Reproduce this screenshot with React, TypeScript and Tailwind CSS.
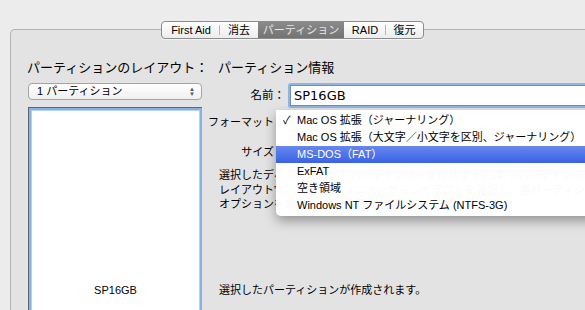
import React from 'react';

const tabs = [
  { label: 'First Aid', w: 'w-[58px]', divider: true },
  { label: '消去', w: 'w-[38px]', divider: false },
  { label: 'パーティション', w: 'w-[86px]', active: true, divider: false },
  { label: 'RAID', w: 'w-[42px]', divider: true },
  { label: '復元', w: 'w-[37px]', divider: false },
];

const formats = [
  { label: 'Mac OS 拡張（ジャーナリング）', checked: true },
  { label: 'Mac OS 拡張（大文字／小文字を区別、ジャーナリング）' },
  { label: 'MS-DOS（FAT）', selected: true },
  { label: 'ExFAT' },
  { label: '空き領域' },
  { label: 'Windows NT ファイルシステム (NTFS-3G)' },
];

function TabBar() {
  return (
    <div className="flex h-[18px] rounded-[4px] border border-[#8c8c8c] bg-gradient-to-b from-white to-[#ececec] overflow-hidden shadow-[0_1px_0_rgba(255,255,255,0.6)]">
      {tabs.map((t) => (
        <div
          key={t.label}
          className={`relative flex items-center justify-center text-[11px] leading-none ${t.w} ${
            t.active ? 'bg-gradient-to-b from-[#8a8a8a] to-[#747474] text-[#e6e6e6]' : 'text-black'
          }`}
        >
          {t.label}
          {t.divider && <span className="absolute right-0 top-[3px] h-[10px] w-px bg-[#b5b5b5]" />}
        </div>
      ))}
    </div>
  );
}

export default function App() {
  return (
    <div className="relative w-[585px] h-[310px] overflow-hidden bg-[#ececec] text-black font-['Liberation_Sans','Noto_Sans_CJK_JP',sans-serif]">
      <div className="flex flex-col pt-[21px]">
        <div className="relative z-10 flex justify-center">
          <TabBar />
        </div>

        <div className="-mt-[10px] ml-[10px] flex h-[300px] w-[620px] rounded-tl-[5px] border-l border-t border-[#b3b3b3] bg-[#e3e3e3] pl-[17px] pt-[30px]">
          {/* left column */}
          <div className="flex w-[174px] flex-col">
            <div className="whitespace-nowrap text-[13px] leading-[16px] -ml-px">パーティションのレイアウト：</div>
            <div className="mt-[7px] flex h-[17px] items-center justify-between rounded-[4px] border border-[#a4a4a4] bg-gradient-to-b from-white to-[#f0f0f0] pl-[8px] pr-[6px]">
              <span className="text-[11px] leading-none">1 パーティション</span>
              <span className="flex flex-col text-[6px] leading-[5px] text-[#555]">
                <span>▲</span>
                <span>▼</span>
              </span>
            </div>
            <div className="mt-[7px] h-[210px] border-l border-t border-[#666] bg-[#84b2e6] p-[2px]">
              <div className="flex h-full flex-col items-center justify-end border border-[#b5d0ef] bg-white pb-[17px]">
                <span className="text-[11px] leading-[14px]">SP16GB</span>
              </div>
            </div>
          </div>

          {/* right column */}
          <div className="flex w-[420px] flex-col">
            <div className="whitespace-nowrap pl-[16px] text-[13px] leading-[16px]">パーティション情報</div>

            <div className="mt-[7px] flex h-[25px] items-center">
              <div className="flex w-[83px] justify-end whitespace-nowrap text-[11.5px]">名前：</div>
              <div className="ml-[3px] h-[25px] w-[330px] rounded-[3px] bg-[#8fb6e3] p-[2px]">
                <div className="flex h-full items-center border border-[#6d90bf] bg-white pl-[3px] text-[13px] font-['DejaVu_Sans',sans-serif]">
                  SP16GB
                </div>
              </div>
            </div>

            <div className="mt-[6px] flex h-[16px] items-center">
              <div className="flex w-[83px] justify-end whitespace-nowrap text-[11px]">フォーマット：</div>
            </div>

            <div className="mt-[14px] flex h-[16px] items-center">
              <div className="flex w-[83px] justify-end whitespace-nowrap text-[11px]">サイズ：</div>
            </div>

            <div className="mt-[8px] whitespace-nowrap pl-[17px] text-[11px] leading-[14.5px]">
              <div>選択したディスクに対してパーティションを作成するには、“パーティションの</div>
              <div>レイアウト”ポップアップメニューからレイアウトを選択し、各パーティションの</div>
              <div>オプションを設定して、“適用”をクリックします。</div>
            </div>

            <div className="mt-[71px] whitespace-nowrap pl-[17px] text-[11px] leading-[14px]">
              選択したパーティションが作成されます。
            </div>
          </div>
        </div>
      </div>

      {/* format pop-up menu */}
      <div className="absolute left-[276px] top-[110px] z-20 w-[330px] rounded-bl-[5px] bg-white/[0.98] pb-[2px] pt-[2px] shadow-[0_5px_12px_rgba(0,0,0,0.35)]">
        {formats.map((f) => (
          <div
            key={f.label}
            className={`relative flex h-[17px] items-center whitespace-nowrap pl-[21px] text-[11px] ${
              f.selected ? 'bg-gradient-to-b from-[#6787ef] to-[#3a61e3] text-white' : 'text-black'
            }`}
          >
            {f.checked && <span className="absolute left-[7px] text-[11px]">✓</span>}
            {f.label}
          </div>
        ))}
      </div>
    </div>
  );
}
